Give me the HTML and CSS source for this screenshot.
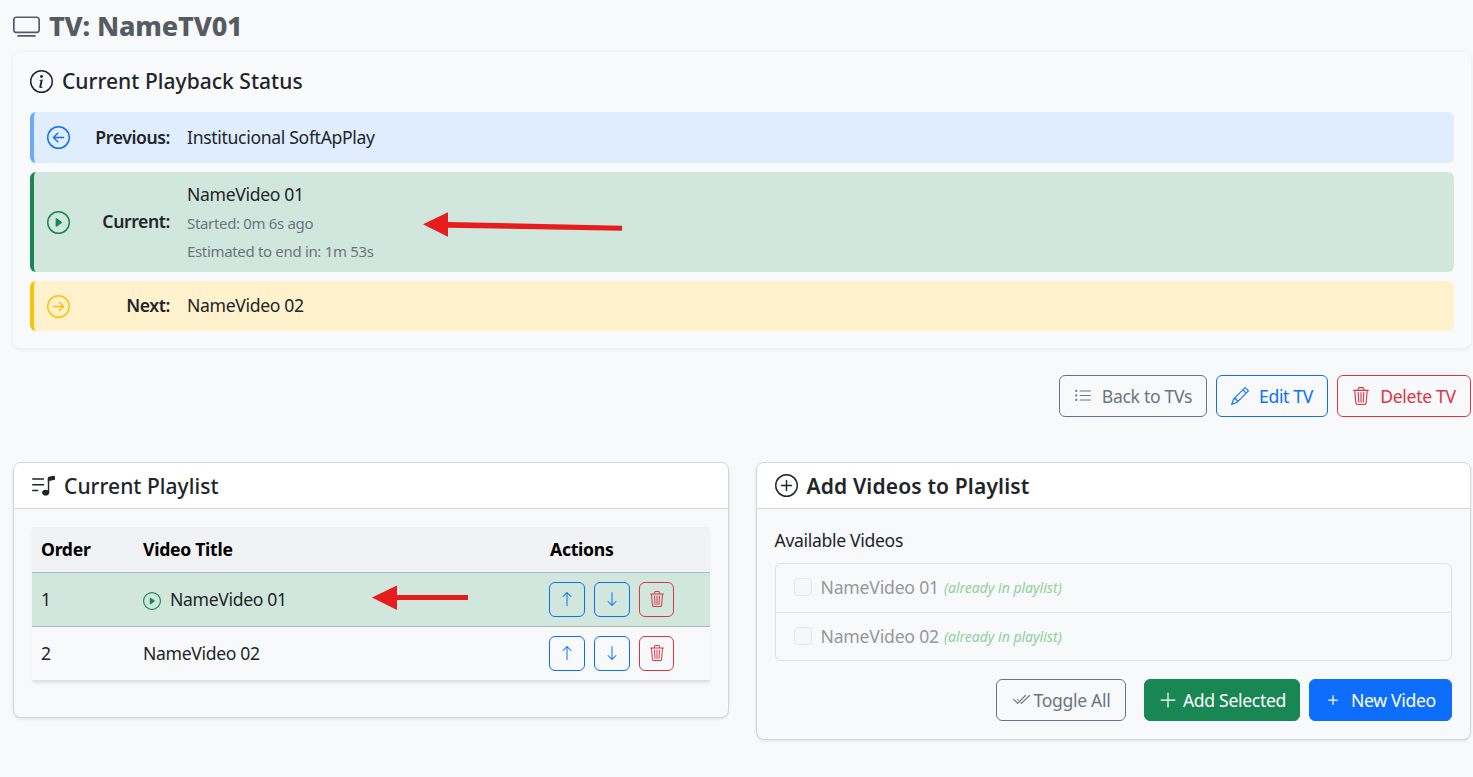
FILE: index.html
```html
<!DOCTYPE html>
<html lang="en">
<head>
<meta charset="utf-8">
<title>TV: NameTV01</title>
<link rel="stylesheet" href="styles.css">
</head>
<body>
<svg class="sprite" aria-hidden="true">
  <symbol id="i-tv" viewBox="0 0 16 16"><path d="M2.5 13.5A.5.5 0 0 1 3 13h10a.5.5 0 0 1 0 1H3a.5.5 0 0 1-.5-.5zM13.991 3l.024.001a1.46 1.46 0 0 1 .538.143.757.757 0 0 1 .302.254c.067.1.145.277.145.602v5.991l-.001.024a1.464 1.464 0 0 1-.143.538.758.758 0 0 1-.254.302c-.1.067-.277.145-.602.145H2.009l-.024-.001a1.464 1.464 0 0 1-.538-.143.758.758 0 0 1-.302-.254C1.078 10.502 1 10.325 1 10V4.009l.001-.024a1.46 1.46 0 0 1 .143-.538.758.758 0 0 1 .254-.302C1.498 3.078 1.675 3 2 3h11.991zM14 2H2C0 2 0 4 0 4v6c0 2 2 2 2 2h12c2 0 2-2 2-2V4c0-2-2-2-2-2z"/></symbol>
  <symbol id="i-info" viewBox="0 0 16 16"><path d="M8 15A7 7 0 1 1 8 1a7 7 0 0 1 0 14zm0 1A8 8 0 1 0 8 0a8 8 0 0 0 0 16z"/><path d="m8.93 6.588-2.29.287-.082.38.45.083c.294.07.352.176.288.469l-.738 3.468c-.194.897.105 1.319.808 1.319.545 0 1.178-.252 1.465-.598l.088-.416c-.2.176-.492.246-.686.246-.275 0-.375-.193-.304-.533L8.93 6.588zM9 4.5a1 1 0 1 1-2 0 1 1 0 0 1 2 0z"/></symbol>
  <symbol id="i-left" viewBox="0 0 16 16"><path d="M1 8a7 7 0 1 0 14 0A7 7 0 0 0 1 8zm15 0A8 8 0 1 1 0 8a8 8 0 0 1 16 0zm-4.5-.5a.5.5 0 0 1 0 1H5.707l2.147 2.146a.5.5 0 0 1-.708.708l-3-3a.5.5 0 0 1 0-.708l3-3a.5.5 0 1 1 .708.708L5.707 7.5H11.5z"/></symbol>
  <symbol id="i-right" viewBox="0 0 16 16"><path d="M1 8a7 7 0 1 0 14 0A7 7 0 0 0 1 8zm15 0A8 8 0 1 1 0 8a8 8 0 0 1 16 0zM4.5 7.5a.5.5 0 0 0 0 1h5.793l-2.147 2.146a.5.5 0 0 0 .708.708l3-3a.5.5 0 0 0 0-.708l-3-3a.5.5 0 1 0-.708.708L10.293 7.5H4.5z"/></symbol>
  <symbol id="i-play" viewBox="0 0 16 16"><path d="M8 15A7 7 0 1 1 8 1a7 7 0 0 1 0 14zm0 1A8 8 0 1 0 8 0a8 8 0 0 0 0 16z"/><path d="M6.271 5.055a.5.5 0 0 1 .52.038l3.5 2.5a.5.5 0 0 1 0 .814l-3.5 2.5A.5.5 0 0 1 6 10.5v-5a.5.5 0 0 1 .271-.445z"/></symbol>
  <symbol id="i-list" viewBox="0 0 16 16"><path d="M5 11.5a.5.5 0 0 1 .5-.5h9a.5.5 0 0 1 0 1h-9a.5.5 0 0 1-.5-.5zm0-4a.5.5 0 0 1 .5-.5h9a.5.5 0 0 1 0 1h-9a.5.5 0 0 1-.5-.5zm0-4a.5.5 0 0 1 .5-.5h9a.5.5 0 0 1 0 1h-9a.5.5 0 0 1-.5-.5zm-3 1a1 1 0 1 0 0-2 1 1 0 0 0 0 2zm0 4a1 1 0 1 0 0-2 1 1 0 0 0 0 2zm0 4a1 1 0 1 0 0-2 1 1 0 0 0 0 2z"/></symbol>
  <symbol id="i-pencil" viewBox="0 0 16 16"><path d="M12.146.146a.5.5 0 0 1 .708 0l3 3a.5.5 0 0 1 0 .708l-10 10a.5.5 0 0 1-.168.11l-5 2a.5.5 0 0 1-.65-.65l2-5a.5.5 0 0 1 .11-.168l10-10zM11.207 2.5 13.5 4.793 14.793 3.5 12.5 1.207 11.207 2.5zm1.586 3L10.5 3.207 4 9.707V10h.5a.5.5 0 0 1 .5.5v.5h.5a.5.5 0 0 1 .5.5v.5h.293l6.5-6.5zm-9.761 5.175-.106.106-1.528 3.821 3.821-1.528.106-.106A.5.5 0 0 1 5 12.5V12h-.5a.5.5 0 0 1-.5-.5V11h-.5a.5.5 0 0 1-.468-.325z"/></symbol>
  <symbol id="i-trash" viewBox="0 0 16 16"><path d="M6.5 1h3a.5.5 0 0 1 .5.5v1H6v-1a.5.5 0 0 1 .5-.5ZM11 2.5v-1A1.5 1.5 0 0 0 9.5 0h-3A1.5 1.5 0 0 0 5 1.5v1H2.506a.58.58 0 0 0-.01 0H1.5a.5.5 0 0 0 0 1h.538l.853 10.66A2 2 0 0 0 4.885 16h6.23a2 2 0 0 0 1.994-1.84l.853-10.66h.538a.5.5 0 0 0 0-1h-.995a.59.59 0 0 0-.01 0H11Zm1.958 1-.846 10.58a1 1 0 0 1-.997.92h-6.23a1 1 0 0 1-.997-.92L3.042 3.5h9.916Zm-7.487 1a.5.5 0 0 1 .528.47l.5 8.5a.5.5 0 0 1-.998.06L5 5.03a.5.5 0 0 1 .47-.53Zm5.058 0a.5.5 0 0 1 .47.53l-.5 8.5a.5.5 0 1 1-.998-.06l.5-8.5a.5.5 0 0 1 .528-.47ZM8 4.5a.5.5 0 0 1 .5.5v8.5a.5.5 0 0 1-1 0V5a.5.5 0 0 1 .5-.5Z"/></symbol>
  <symbol id="i-music" viewBox="0 0 16 16"><path d="M12 13c0 1.105-1.12 2-2.5 2S7 14.105 7 13s1.12-2 2.5-2 2.5.895 2.5 2z"/><path fill-rule="evenodd" d="M12 3v10h-1V3h1z"/><path d="M11 2.82a1 1 0 0 1 .804-.98l3-.6A1 1 0 0 1 16 2.22V4l-5 1V2.82z"/><path fill-rule="evenodd" d="M0 11.5a.5.5 0 0 1 .5-.5H4a.5.5 0 0 1 0 1H.5a.5.5 0 0 1-.5-.5zm0-4A.5.5 0 0 1 .5 7H8a.5.5 0 0 1 0 1H.5a.5.5 0 0 1-.5-.5zm0-4A.5.5 0 0 1 .5 3H8a.5.5 0 0 1 0 1H.5a.5.5 0 0 1-.5-.5z"/></symbol>
  <symbol id="i-plus-circle" viewBox="0 0 16 16"><path d="M8 15A7 7 0 1 1 8 1a7 7 0 0 1 0 14zm0 1A8 8 0 1 0 8 0a8 8 0 0 0 0 16z"/><path d="M8 4a.5.5 0 0 1 .5.5v3h3a.5.5 0 0 1 0 1h-3v3a.5.5 0 0 1-1 0v-3h-3a.5.5 0 0 1 0-1h3v-3A.5.5 0 0 1 8 4z"/></symbol>
  <symbol id="i-up" viewBox="0 0 16 16"><path fill-rule="evenodd" d="M8 15a.5.5 0 0 0 .5-.5V2.707l3.146 3.147a.5.5 0 0 0 .708-.708l-4-4a.5.5 0 0 0-.708 0l-4 4a.5.5 0 1 0 .708.708L7.5 2.707V14.5a.5.5 0 0 0 .5.5z"/></symbol>
  <symbol id="i-down" viewBox="0 0 16 16"><path fill-rule="evenodd" d="M8 1a.5.5 0 0 1 .5.5v11.793l3.146-3.147a.5.5 0 0 1 .708.708l-4 4a.5.5 0 0 1-.708 0l-4-4a.5.5 0 0 1 .708-.708L7.5 13.293V1.5A.5.5 0 0 1 8 1z"/></symbol>
  <symbol id="i-plus" viewBox="0 0 16 16"><path d="M8 4a.5.5 0 0 1 .5.5v3h3a.5.5 0 0 1 0 1h-3v3a.5.5 0 0 1-1 0v-3h-3a.5.5 0 0 1 0-1h3v-3A.5.5 0 0 1 8 4z"/></symbol>
  <symbol id="i-plus-lg" viewBox="0 0 16 16"><path fill-rule="evenodd" d="M8 2a.5.5 0 0 1 .5.5v5h5a.5.5 0 0 1 0 1h-5v5a.5.5 0 0 1-1 0v-5h-5a.5.5 0 0 1 0-1h5v-5A.5.5 0 0 1 8 2Z"/></symbol>
  <symbol id="i-checks" viewBox="0 0 16 16"><path d="M12.354 4.354a.5.5 0 0 0-.708-.708L5 10.293 1.854 7.146a.5.5 0 1 0-.708.708l3.5 3.5a.5.5 0 0 0 .708 0l7-7zm-4.208 7-.896-.897.707-.707.543.543 6.646-6.647a.5.5 0 0 1 .708.708l-7 7a.5.5 0 0 1-.708 0z"/><path d="m5.354 7.146.896.897-.707.707-.897-.896a.5.5 0 1 1 .708-.708z"/></symbol>
</svg>

<h1 class="page-title"><svg class="ico ico-tv"><use href="#i-tv"/></svg>TV: NameTV01</h1>

<section class="status-card">
  <h2 class="status-title"><svg class="ico ico-head"><use href="#i-info"/></svg>Current Playback Status</h2>
  <div class="alert alert-prev">
    <svg class="ico ico-alert"><use href="#i-left"/></svg>
    <strong class="alert-label">Previous:</strong>
    <div class="alert-value">Institucional SoftApPlay</div>
  </div>
  <div class="alert alert-cur">
    <svg class="ico ico-alert"><use href="#i-play"/></svg>
    <strong class="alert-label">Current:</strong>
    <div class="alert-value">
      <div>NameVideo 01</div>
      <div class="meta meta-first">Started: 0m 6s ago</div>
      <div class="meta">Estimated to end in: 1m 53s</div>
    </div>
  </div>
  <div class="alert alert-next">
    <svg class="ico ico-alert"><use href="#i-right"/></svg>
    <strong class="alert-label">Next:</strong>
    <div class="alert-value">NameVideo 02</div>
  </div>
</section>

<div class="top-actions">
  <a class="btn btn-grey btn-back"><svg class="ico ico-btn"><use href="#i-list"/></svg>Back to TVs</a>
  <a class="btn btn-blue btn-edit"><svg class="ico ico-btn"><use href="#i-pencil"/></svg>Edit TV</a>
  <a class="btn btn-red btn-del"><svg class="ico ico-btn"><use href="#i-trash"/></svg>Delete TV</a>
</div>

<div class="columns">
  <section class="card">
    <h3 class="card-head"><svg class="ico ico-head"><use href="#i-music"/></svg>Current Playlist</h3>
    <div class="card-body body-left">
      <table class="table">
        <thead>
          <tr><th class="col-order">Order</th><th class="col-title">Video Title</th><th class="col-actions">Actions</th></tr>
        </thead>
        <tbody>
          <tr class="row-active">
            <td>1</td>
            <td><svg class="ico ico-row"><use href="#i-play"/></svg>NameVideo 01</td>
            <td><div class="row-btns">
              <a class="sq sq-blue"><svg class="ico ico-sq"><use href="#i-up"/></svg></a>
              <a class="sq sq-blue"><svg class="ico ico-sq"><use href="#i-down"/></svg></a>
              <a class="sq sq-red"><svg class="ico ico-sq"><use href="#i-trash"/></svg></a>
            </div></td>
          </tr>
          <tr>
            <td>2</td>
            <td>NameVideo 02</td>
            <td><div class="row-btns">
              <a class="sq sq-blue"><svg class="ico ico-sq"><use href="#i-up"/></svg></a>
              <a class="sq sq-blue"><svg class="ico ico-sq"><use href="#i-down"/></svg></a>
              <a class="sq sq-red"><svg class="ico ico-sq"><use href="#i-trash"/></svg></a>
            </div></td>
          </tr>
        </tbody>
      </table>
    </div>
  </section>

  <section class="card">
    <h3 class="card-head head-strong"><svg class="ico ico-head"><use href="#i-plus-circle"/></svg>Add Videos to Playlist</h3>
    <div class="card-body body-right">
      <div class="avail-label">Available Videos</div>
      <ul class="list">
        <li class="list-item"><span class="check"></span><span class="item-name">NameVideo 01</span><em class="item-note">(already in playlist)</em></li>
        <li class="list-item"><span class="check"></span><span class="item-name">NameVideo 02</span><em class="item-note">(already in playlist)</em></li>
      </ul>
      <div class="form-actions">
        <a class="btn btn-grey btn-toggle"><svg class="ico ico-check"><use href="#i-checks"/></svg>Toggle All</a>
        <a class="btn btn-green btn-add"><svg class="ico ico-plus"><use href="#i-plus-lg"/></svg>Add Selected</a>
        <a class="btn btn-solid btn-new"><svg class="ico ico-plus-s"><use href="#i-plus"/></svg>New Video</a>
      </div>
    </div>
  </section>
</div>

<svg class="arrow arrow-one" viewBox="0 0 200 26" width="200" height="26"><path d="M0 12.3 L25 0.3 L25 10 L199 13.7 L199 18.7 L25 15.7 L25 24.7 Z" fill="#e71c1f"/></svg>
<svg class="arrow arrow-two" viewBox="0 0 98 26" width="98" height="26"><path d="M1 12.5 L26 0.5 L26 10 L97 10 L97 15 L26 15 L26 25 Z" fill="#e71c1f"/></svg>
</body>
</html>
```

FILE: styles.css
```css
* { box-sizing: border-box; }
html, body { margin: 0; padding: 0; }
body {
  position: relative;
  height: 777px;
  overflow: hidden;
  padding: 0 2px 0 13px;
  background: #f8f9fa;
  color: #212529;
  font-family: "Noto Sans", "Open Sans", sans-serif;
  font-size: 17.6px;
  line-height: 24px;
  letter-spacing: -0.33px;
}
.sprite { display: none; }
.ico { fill: currentColor; flex: none; display: inline-block; }

.page-title {
  display: flex;
  align-items: center;
  height: 52px;
  margin: 0;
  font-size: 27px;
  font-weight: 800;
  color: #565b62;
  letter-spacing: -0.15px;
}
.ico-tv { width: 27px; height: 27px; margin-right: 9px; }

.status-card {
  height: 296px;
  padding: 17px 17px 0;
  background: #f9fafb;
  border-radius: 8px;
  box-shadow: 0 1px 5px rgba(0,0,0,.07);
}
.status-title {
  display: flex;
  align-items: center;
  height: 24px;
  margin: 0 0 19px;
  font-size: 21px;
  font-weight: 500;
  letter-spacing: 0.04px;
  color: #212529;
}
.ico-head { width: 23px; height: 23px; margin-right: 9px; }

.alert {
  display: flex;
  align-items: center;
  margin-bottom: 9px;
  padding-left: 13px;
  border-left: 4px solid;
  border-radius: 6px;
}
.alert-prev { height: 51px; background: #e0edff; border-color: #6ea8fe; }
.alert-cur { height: 100px; background: #d1e7dd; border-color: #198754; }
.alert-next { height: 50px; background: #fff2cc; border-color: #ffc107; }
.alert-prev .ico-alert { color: #0d6efd; }
.alert-cur .ico-alert { color: #198754; }
.alert-next .ico-alert { color: #ffc107; }
.ico-alert { width: 23px; height: 23px; }
.alert-label { width: 100px; padding-bottom: 2px; text-align: right; font-weight: 600; letter-spacing: -0.4px; }
.alert-value { margin-left: 17px; padding-bottom: 2px; }
.meta { height: 28px; line-height: 28px; font-size: 15px; color: #6c757d; }
.meta-first { margin-top: 3px; }
.alert-cur .alert-value { align-self: flex-start; padding-top: 10px; }

.top-actions {
  display: flex;
  justify-content: flex-end;
  gap: 9px;
  margin-top: 27px;
}
.btn {
  display: inline-flex;
  align-items: center;
  justify-content: center;
  height: 42px;
  border: 1px solid;
  border-radius: 6px;
  white-space: nowrap;
}
.btn-grey { color: #6c757d; border-color: #6c757d; }
.btn-blue { color: #0d6efd; border-color: #0d6efd; }
.btn-red { color: #dc3545; border-color: #dc3545; }
.btn-green { color: #fff; background: #198754; border-color: #198754; }
.btn-solid { color: #fff; background: #0d6efd; border-color: #0d6efd; }
.btn-back { width: 148px; }
.btn-edit { width: 112px; }
.btn-del { width: 134px; }
.ico-btn { width: 18px; height: 18px; margin-right: 10px; }

.columns {
  display: grid;
  grid-template-columns: 1fr 1fr;
  gap: 27px;
  align-items: start;
  margin-top: 45px;
}
.card {
  border: 1px solid #d3d5d8;
  border-radius: 8px;
  background: #f8f9fa;
  box-shadow: 0 1px 3px rgba(0,0,0,.1);
  overflow: hidden;
}
.card-head {
  display: flex;
  align-items: center;
  height: 46px;
  margin: 0;
  padding-left: 18px;
  background: #fff;
  border-bottom: 1px solid #d3d5d8;
  font-size: 21px;
  font-weight: 500;
  letter-spacing: 0.05px;
}
.head-strong { font-weight: 600; letter-spacing: 0.15px; }
.card-body { padding: 18px; }
.body-left { padding-bottom: 36px; }

.table {
  width: 100%;
  border-collapse: collapse;
  table-layout: fixed;
  box-shadow: 0 3px 3px -1px rgba(0,0,0,.1);
}
.table th {
  height: 45px;
  padding: 0 9px;
  text-align: left;
  font-weight: 700;
  letter-spacing: -0.28px;
  color: #000;
  background: #f1f2f4;
  border-bottom: 1px solid #b8babd;
}
.table td {
  height: 54px;
  padding: 0 9px;
  color: #212529;
  border-bottom: 1px solid #dee2e6;
}
.col-order { width: 102px; }
.col-title { width: 407px; }
.row-active td { background: #d1e7dd; border-bottom-color: #a8b9b1; }
.ico-row { width: 18px; height: 18px; margin-right: 9px; color: #198754; vertical-align: -4px; }
.row-btns { display: flex; gap: 9px; margin-left: -1px; }
.sq {
  display: flex;
  align-items: center;
  justify-content: center;
  width: 36px;
  height: 35px;
  border: 1px solid;
  border-radius: 6px;
}
.sq-red { width: 35px; color: #dc3545; }
.sq-blue { color: #0d6efd; }
.ico-sq { width: 16px; height: 16px; }

.avail-label { height: 24px; margin-top: 1px; }
.list {
  margin: 11px 0 0;
  padding: 0;
  list-style: none;
  border: 1px solid #dfe2e5;
  border-radius: 6px;
}
.list-item {
  display: flex;
  align-items: center;
  height: 48px;
  padding: 0 0 2px 18px;
}
.list-item + .list-item { border-top: 1px solid #dfe2e5; height: 48px; }
.check {
  width: 18px;
  height: 18px;
  margin-right: 9px;
  border: 1px solid #e6e7e9;
  border-radius: 4px;
  background: #f6f7f8;
}
.item-name { color: #94979a; letter-spacing: -0.2px; }
.item-note { margin-left: 5px; margin-top: 2px; font-size: 14px; letter-spacing: 0; color: #8fcfa0; }

.form-actions {
  display: flex;
  justify-content: flex-end;
  margin-top: 18px;
}
.btn-toggle { width: 130px; }
.btn-add { width: 156px; margin-left: 18px; }
.btn-new { width: 143px; margin-left: 9px; justify-content: flex-start; padding-left: 12.5px; }
.ico-check { width: 18px; height: 18px; margin-right: 4px; }
.ico-plus { width: 20px; height: 20px; margin-right: 5px; }
.ico-plus-s { width: 20px; height: 20px; margin-right: 8.5px; }

.arrow { position: absolute; }
.arrow-one { left: 423px; top: 212px; }
.arrow-two { left: 371px; top: 585px; }
```
